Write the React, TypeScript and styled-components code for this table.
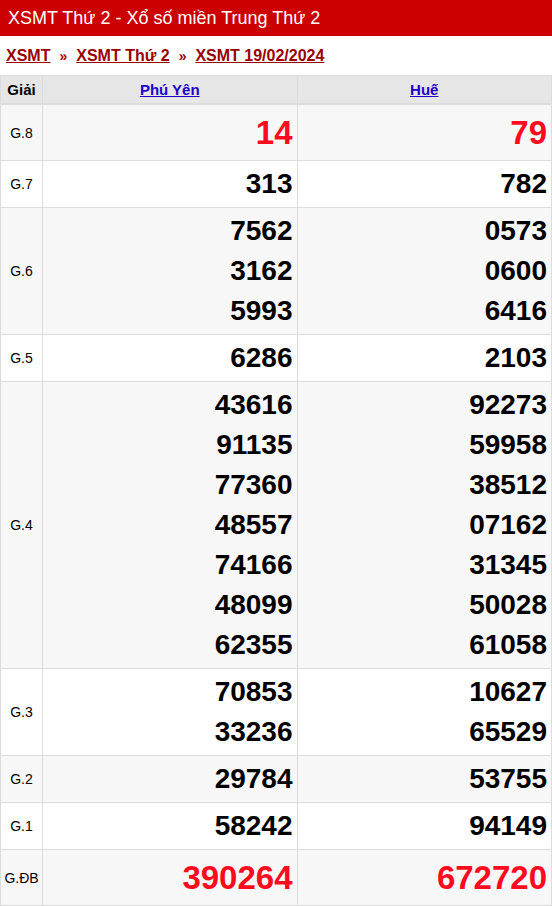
import * as React from 'react'
import styled, { createGlobalStyle } from 'styled-components'

const GlobalStyle = createGlobalStyle`
  body {
    margin: 0;
    background: #fff;
    font-family: "Liberation Sans", Arial, sans-serif;
  }
`

interface Prize {
  label: string
  left: string[]
  right: string[]
  big?: boolean
}

const prizes: Prize[] = [
  { label: 'G.8', left: ['14'], right: ['79'], big: true },
  { label: 'G.7', left: ['313'], right: ['782'] },
  { label: 'G.6', left: ['7562', '3162', '5993'], right: ['0573', '0600', '6416'] },
  { label: 'G.5', left: ['6286'], right: ['2103'] },
  {
    label: 'G.4',
    left: ['43616', '91135', '77360', '48557', '74166', '48099', '62355'],
    right: ['92273', '59958', '38512', '07162', '31345', '50028', '61058'],
  },
  { label: 'G.3', left: ['70853', '33236'], right: ['10627', '65529'] },
  { label: 'G.2', left: ['29784'], right: ['53755'] },
  { label: 'G.1', left: ['58242'], right: ['94149'] },
  { label: 'G.ĐB', left: ['390264'], right: ['672720'], big: true },
]

const Page = styled.div`
  width: 552px;
`

const TitleBar = styled.h1`
  margin: 0;
  height: 36px;
  background: #cc0000;
  color: #fff;
  font-size: 18px;
  font-weight: normal;
  line-height: 36px;
  padding: 0 8px;
`

const Crumbs = styled.div`
  display: flex;
  align-items: center;
  height: 39px;
  padding: 0 6px;
  font-size: 16px;
  font-weight: bold;
  color: #990000;
`

const Crumb = styled.a`
  color: #990000;
  text-decoration: underline;
`

const Sep = styled.span`
  margin: 0 9px;
  font-size: 14px;
`

const Table = styled.table`
  width: 552px;
  border-collapse: collapse;
  table-layout: fixed;
  border-top: 1px solid #ddd;
`

const Head = styled.th`
  background: #e6e6e6;
  height: 27px;
  padding: 0;
  font-size: 15px;
  border: 1px solid #dcdcdc;
  border-bottom: 2px solid #dcdcdc;
  text-align: center;
`

const HeadLink = styled.a`
  color: #2200cc;
  text-decoration: underline;
  font-weight: bold;
`

const Row = styled.tr<{ $alt: boolean }>`
  background: ${(p) => (p.$alt ? '#f7f7f7' : '#fff')};
`

const Label = styled.td`
  border: 1px solid #dcdcdc;
  padding: 0;
  text-align: center;
  font-size: 14px;
  color: #000;
`

const Cell = styled.td`
  border: 1px solid #dcdcdc;
  padding: 3px 4px 3px 0;
  text-align: right;
  vertical-align: middle;
`

const Num = styled.div<{ $big?: boolean }>`
  font-weight: bold;
  font-size: ${(p) => (p.$big ? '33px' : '28px')};
  line-height: ${(p) => (p.$big ? '49px' : '40px')};
  color: ${(p) => (p.$big ? '#ff0a1f' : '#000')};
`

export default function App() {
  return (
    <Page>
      <GlobalStyle />
      <TitleBar>XSMT Thứ 2 - Xổ số miền Trung Thứ 2</TitleBar>
      <Crumbs>
        <Crumb>XSMT</Crumb>
        <Sep>»</Sep>
        <Crumb>XSMT Thứ 2</Crumb>
        <Sep>»</Sep>
        <Crumb>XSMT 19/02/2024</Crumb>
      </Crumbs>
      <Table>
        <colgroup>
          <col style={{ width: 42 }} />
          <col />
          <col />
        </colgroup>
        <thead>
          <tr>
            <Head>Giải</Head>
            <Head>
              <HeadLink>Phú Yên</HeadLink>
            </Head>
            <Head>
              <HeadLink>Huế</HeadLink>
            </Head>
          </tr>
        </thead>
        <tbody>
          {prizes.map((p, i) => (
            <Row key={p.label} $alt={i % 2 === 0}>
              <Label>{p.label}</Label>
              <Cell>
                {p.left.map((n, j) => (
                  <Num key={j} $big={p.big}>{n}</Num>
                ))}
              </Cell>
              <Cell>
                {p.right.map((n, j) => (
                  <Num key={j} $big={p.big}>{n}</Num>
                ))}
              </Cell>
            </Row>
          ))}
        </tbody>
      </Table>
    </Page>
  )
}
